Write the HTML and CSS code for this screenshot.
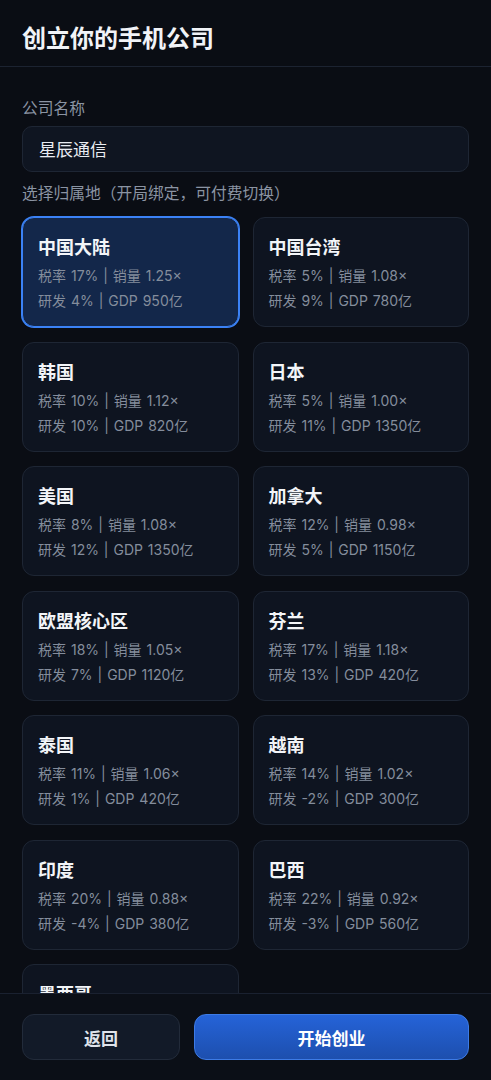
FILE: index.html
```html
<!DOCTYPE html>
<html lang="zh-CN">
<head>
    <meta charset="UTF-8">
    <title>创立你的手机公司</title>
    <link rel="stylesheet" href="styles.css">
</head>
<body>
    <div class="app">
        <header class="top-bar">
            <h1>创立你的手机公司</h1>
        </header>

        <main class="content">
            <div class="field-label">公司名称</div>
            <div class="text-input">星辰通信</div>

            <div class="field-label region-label">选择归属地（开局绑定，可付费切换）</div>
            <div class="region-grid">
                <div class="region-card selected">
                    <div class="region-name">中国大陆</div>
                    <div class="region-stats">税率 17% | 销量 1.25×<br>研发 4% | GDP 950亿</div>
                </div>
                <div class="region-card">
                    <div class="region-name">中国台湾</div>
                    <div class="region-stats">税率 5% | 销量 1.08×<br>研发 9% | GDP 780亿</div>
                </div>
                <div class="region-card">
                    <div class="region-name">韩国</div>
                    <div class="region-stats">税率 10% | 销量 1.12×<br>研发 10% | GDP 820亿</div>
                </div>
                <div class="region-card">
                    <div class="region-name">日本</div>
                    <div class="region-stats">税率 5% | 销量 1.00×<br>研发 11% | GDP 1350亿</div>
                </div>
                <div class="region-card">
                    <div class="region-name">美国</div>
                    <div class="region-stats">税率 8% | 销量 1.08×<br>研发 12% | GDP 1350亿</div>
                </div>
                <div class="region-card">
                    <div class="region-name">加拿大</div>
                    <div class="region-stats">税率 12% | 销量 0.98×<br>研发 5% | GDP 1150亿</div>
                </div>
                <div class="region-card">
                    <div class="region-name">欧盟核心区</div>
                    <div class="region-stats">税率 18% | 销量 1.05×<br>研发 7% | GDP 1120亿</div>
                </div>
                <div class="region-card">
                    <div class="region-name">芬兰</div>
                    <div class="region-stats">税率 17% | 销量 1.18×<br>研发 13% | GDP 420亿</div>
                </div>
                <div class="region-card">
                    <div class="region-name">泰国</div>
                    <div class="region-stats">税率 11% | 销量 1.06×<br>研发 1% | GDP 420亿</div>
                </div>
                <div class="region-card">
                    <div class="region-name">越南</div>
                    <div class="region-stats">税率 14% | 销量 1.02×<br>研发 -2% | GDP 300亿</div>
                </div>
                <div class="region-card">
                    <div class="region-name">印度</div>
                    <div class="region-stats">税率 20% | 销量 0.88×<br>研发 -4% | GDP 380亿</div>
                </div>
                <div class="region-card">
                    <div class="region-name">巴西</div>
                    <div class="region-stats">税率 22% | 销量 0.92×<br>研发 -3% | GDP 560亿</div>
                </div>
                <div class="region-card">
                    <div class="region-name">墨西哥</div>
                </div>
            </div>
        </main>

        <footer class="bottom-bar">
            <button class="btn btn-back">返回</button>
            <button class="btn btn-start">开始创业</button>
        </footer>
    </div>
</body>
</html>
```

FILE: styles.css
```css
* {
    margin: 0;
    padding: 0;
    box-sizing: border-box;
    font-family: 'Inter', 'Noto Sans CJK SC', sans-serif;
}

body {
    background: #0a0d14;
    color: #e6e9ef;
}

.app {
    height: 100vh;
    display: flex;
    flex-direction: column;
    overflow: hidden;
}

.top-bar {
    height: 67px;
    flex-shrink: 0;
    display: flex;
    align-items: center;
    padding: 6px 22px 0;
    border-bottom: 1px solid #1c2331;
}

.top-bar h1 {
    font-size: 24px;
    font-weight: 700;
    color: #f1f3f7;
}

.content {
    flex: 1;
    overflow: hidden;
    padding: 31px 22px 0;
}

.field-label {
    font-size: 15.75px;
    line-height: 22px;
    color: #8b94a3;
}

.region-label {
    margin-top: 11px;
}

.text-input {
    margin-top: 6px;
    height: 46px;
    display: flex;
    align-items: center;
    padding: 0 16px 2px;
    font-size: 17px;
    color: #e9ecf2;
    background: #0f1521;
    border: 1px solid #1e2634;
    border-radius: 10px;
}

.region-grid {
    margin-top: 12px;
    display: grid;
    grid-template-columns: 1fr 1fr;
    gap: 14.5px 14px;
}

.region-card {
    height: 110px;
    padding: 16px 15px 12px;
    background: #0e1420;
    border: 1px solid #1e2634;
    border-radius: 12px;
}

.region-card.selected {
    background: #13274a;
    border-color: #3b82f6;
    box-shadow: 0 0 0 1px #3b82f6;
}

.region-name {
    font-size: 18px;
    line-height: 28px;
    font-weight: 700;
    color: #f3f5f8;
}

.region-stats {
    margin-top: 1px;
    font-size: 14px;
    line-height: 25px;
    word-spacing: 1px;
    color: #848d9c;
}

.bottom-bar {
    flex-shrink: 0;
    display: flex;
    gap: 14px;
    padding: 20px 22px;
    background: #0b0f17;
    border-top: 1px solid #1a2130;
}

.btn {
    height: 46px;
    border-radius: 12px;
    font-size: 17px;
    font-weight: 700;
    cursor: pointer;
}

.btn-back {
    width: 158px;
    background: #121a28;
    color: #dfe3ea;
    border: 1px solid #222b3a;
}

.btn-start {
    flex: 1;
    background: linear-gradient(180deg, #2563d8 0%, #1d4fae 100%);
    color: #ffffff;
    border: 1px solid #3d7be6;
}
```
